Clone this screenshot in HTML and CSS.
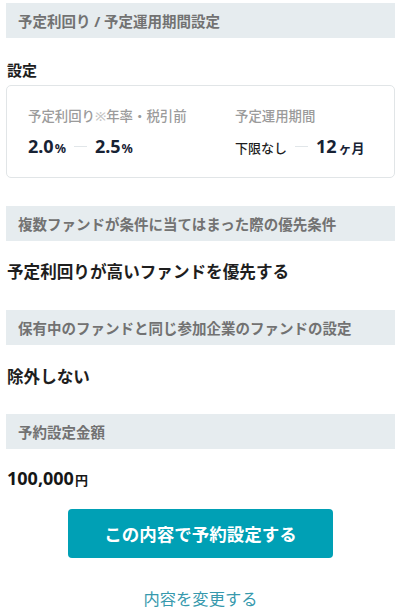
FILE: index.html
```html
<!DOCTYPE html>
<html lang="ja">
<head>
<meta charset="utf-8">
<title>予約設定</title>
<link rel="stylesheet" href="styles.css">
</head>
<body>
<main class="page">
  <h2 class="sec-head">予定利回り / 予定運用期間設定</h2>
  <h3 class="sub-title">設定</h3>
  <div class="card">
    <div class="col">
      <div class="label">予定利回り<span class="note">※</span>年率・税引前</div>
      <div class="values">
        <span class="num">2.0</span><span class="unit">%</span>
        <span class="dash"></span>
        <span class="num">2.5</span><span class="unit">%</span>
      </div>
    </div>
    <div class="col">
      <div class="label">予定運用期間</div>
      <div class="values">
        <span class="plain">下限なし</span>
        <span class="dash"></span>
        <span class="num">12</span><span class="unit-jp">ヶ月</span>
      </div>
    </div>
  </div>

  <h2 class="sec-head gap-a">複数ファンドが条件に当てはまった際の優先条件</h2>
  <p class="value-text v1">予定利回りが高いファンドを優先する</p>

  <h2 class="sec-head gap-b">保有中のファンドと同じ参加企業のファンドの設定</h2>
  <p class="value-text v2">除外しない</p>

  <h2 class="sec-head gap-c">予約設定金額</h2>
  <p class="amount"><span class="num">100,000</span><span class="yen">円</span></p>

  <div class="actions">
    <button class="primary" type="button">この内容で予約設定する</button>
    <a class="link" href="#">内容を変更する</a>
  </div>
</main>
</body>
</html>
```

FILE: styles.css
```css
* { box-sizing: border-box; }

body {
  margin: 0;
  background: #ffffff;
  font-family: "Noto Sans", "Noto Sans CJK JP", sans-serif;
  color: #1e1e1e;
}

.page {
  padding: 3px 5px 0 6px;
}

.sec-head {
  margin: 0;
  height: 35px;
  display: flex;
  align-items: center;
  padding-left: 12px;
  background: #e6ecef;
  font-size: 14.5px;
  font-weight: 700;
  color: #727272;
  letter-spacing: 0;
}

.sub-title {
  margin: 21px 0 0 1px;
  font-size: 15px;
  line-height: 22px;
  font-weight: 700;
  color: #1e1e1e;
}

.card {
  margin-top: 4px;
  border: 1px solid #e1e5e7;
  border-radius: 5px;
  padding: 19px 10px 20px 21px;
  display: grid;
  grid-template-columns: 207px 1fr;
}

.label {
  font-size: 13.4px;
  line-height: 22px;
  color: #9b9b9b;
  font-weight: 500;
  white-space: nowrap;
}

.note { color: #c4c4c4; }

.values {
  margin-top: 8px;
  height: 22px;
  display: flex;
  align-items: baseline;
  white-space: nowrap;
}

.num {
  font-size: 18px;
  font-weight: 700;
  color: #172234;
  line-height: 22px;
}

.unit {
  font-size: 12.5px;
  font-weight: 700;
  color: #172234;
  margin-left: 1px;
}

.unit-jp {
  font-size: 13px;
  font-weight: 700;
  color: #172234;
  margin-left: 2px;
}

.plain {
  font-size: 13px;
  font-weight: 500;
  color: #1e1e1e;
}

.dash {
  display: inline-block;
  width: 13px;
  height: 1px;
  background: #e1e6e9;
  margin: 0 8px;
  align-self: center;
}

.gap-a { margin-top: 28px; }
.gap-b { margin-top: 26px; }
.gap-c { margin-top: 25px; }

.value-text {
  margin: 19px 0 0 1px;
  font-size: 16.6px;
  line-height: 24px;
  font-weight: 700;
  color: #1e1e1e;
}

.v2 { margin-top: 20px; }

.amount {
  margin: 18px 0 0 1px;
  line-height: 24px;
}

.amount .num { color: #161616; }

.yen {
  font-size: 13px;
  font-weight: 700;
  margin-left: 1px;
  color: #161616;
}

.actions {
  margin-top: 17px;
  display: flex;
  flex-direction: column;
  align-items: center;
}

.primary {
  width: 265px;
  height: 49px;
  border: none;
  border-radius: 4px;
  background: #00a0b5;
  color: #ffffff;
  font-family: "Noto Sans", "Noto Sans CJK JP", sans-serif;
  font-size: 17.5px;
  font-weight: 700;
  cursor: pointer;
}

.link {
  margin-top: 29px;
  font-size: 16.3px;
  line-height: 24px;
  color: #3799ad;
  text-decoration: none;
}
```
